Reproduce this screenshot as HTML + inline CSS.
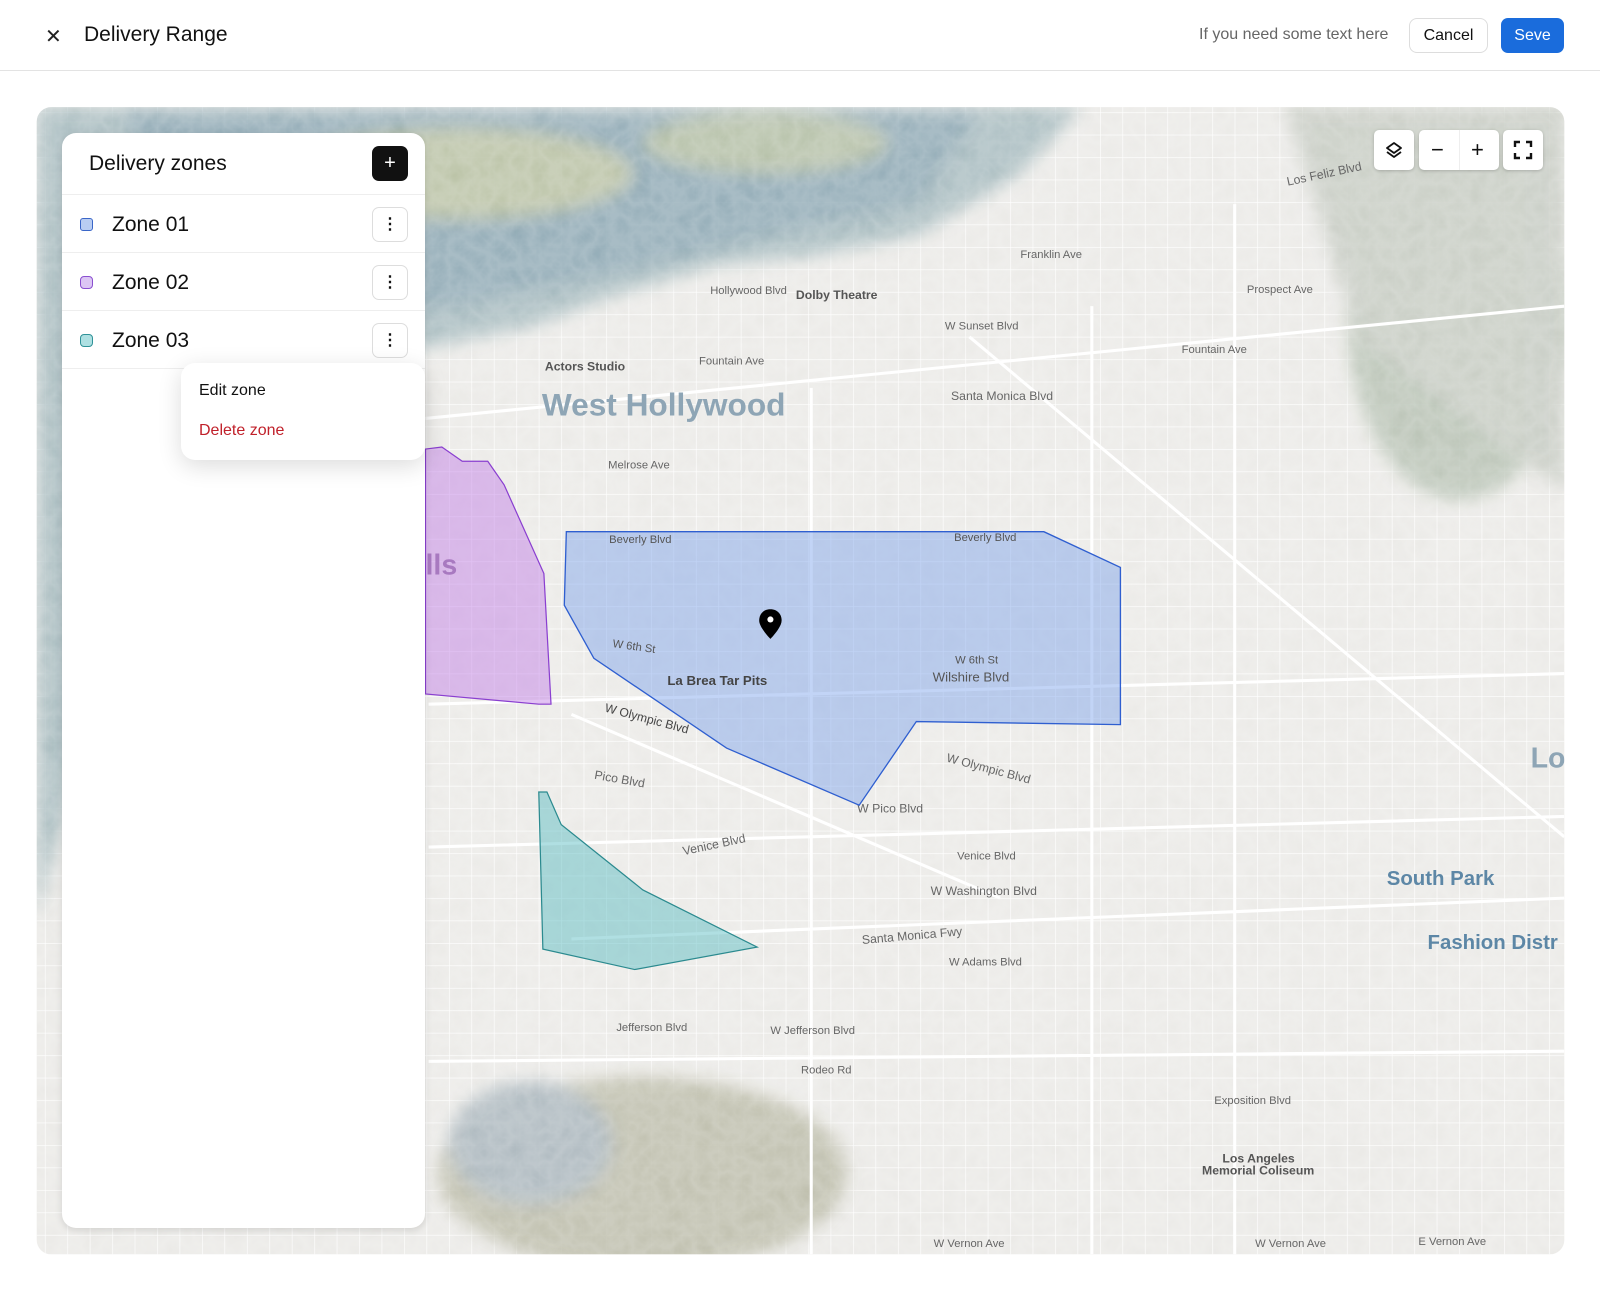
<!DOCTYPE html>
<html><head><meta charset="utf-8"><style>
*{box-sizing:border-box;margin:0;padding:0}
body{width:1600px;height:1290px;background:#fff;font-family:"Liberation Sans",sans-serif;position:relative;overflow:hidden;color:#111}
.top{position:absolute;left:0;top:0;width:1600px;height:71px;border-bottom:1px solid #e3e3e3}
.x{position:absolute;left:45px;top:24px;font-size:20px;color:#222}
.title{position:absolute;left:84px;top:23px;font-size:21px;color:#111}
.hint{position:absolute;left:1199px;top:26px;font-size:16px;color:#666}
.cancel{position:absolute;left:1409px;top:18px;width:79px;height:35px;border:1px solid #ddd;border-radius:8px;font-size:16px;text-align:center;line-height:33px}
.save{position:absolute;left:1501px;top:18px;width:63px;height:35px;background:#1a6cdc;color:#fff;border-radius:7px;font-size:16px;text-align:center;line-height:35px}
svg.map{position:absolute;left:0;top:0}
.panel{position:absolute;left:62px;top:133px;width:363px;height:1095px;background:#fff;border-radius:14px;box-shadow:0 2px 8px rgba(0,0,0,.12)}
.ph{height:62px;border-bottom:1px solid #eee;position:relative}
.ph span{position:absolute;left:27px;top:19px;font-size:21px}
.plus{position:absolute;right:17px;top:13px;width:36px;height:35px;background:#111;border-radius:7px;color:#fff;text-align:center;line-height:34px;font-size:20px}
.row{height:58px;border-bottom:1px solid #eee;position:relative}
.row .sq{position:absolute;left:18px;top:23px;width:13px;height:13px;border-radius:3px}
.row .lbl{position:absolute;left:50px;top:18px;font-size:21px}
.row .dots{position:absolute;right:17px;top:12px;width:36px;height:35px;border:1px solid #ddd;border-radius:7px;text-align:center;line-height:33px;font-weight:bold;font-size:16px}
.menu{position:absolute;left:181px;top:363px;width:244px;height:97px;background:#fff;border-radius:14px;box-shadow:0 6px 24px rgba(0,0,0,.14)}
.menu div{position:absolute;left:18px;font-size:16px}
.ctl{position:absolute;background:#fff;border-radius:5px;box-shadow:0 1px 3px rgba(0,0,0,.2);text-align:center;font-size:22px;line-height:40px}
</style></head><body>
<div class="top"><div class="x">✕</div><div class="title">Delivery Range</div><div class="hint">If you need some text here</div><div class="cancel">Cancel</div><div class="save">Seve</div></div>
<svg class="map" width="1600" height="1290" viewBox="0 0 1568 1264" preserveAspectRatio="none">
<defs>
<clipPath id="c"><rect x="36" y="105" width="1497" height="1124" rx="14"/></clipPath>
<pattern id="g" width="22" height="22" patternUnits="userSpaceOnUse"><path d="M0 0H22M0 0V22" stroke="#fff" stroke-width="1.2" fill="none"/></pattern>
<filter id="b"><feGaussianBlur stdDeviation="8"/></filter>
<filter id="b2"><feTurbulence baseFrequency="0.05" numOctaves="3" seed="3"/><feColorMatrix type="matrix" values="0 0 0 0 1  0 0 0 0 1  0 0 0 0 1  0 0 0 -1.2 1.1"/></filter>
</defs>
<g clip-path="url(#c)">
<rect x="0" y="0" width="1568" height="1264" fill="#ebeae7"/>
<rect x="0" y="0" width="1568" height="1264" fill="url(#g)"/>
<g filter="url(#b)" opacity=".9">
<path d="M36 105H1060L1000 170 900 230 800 250 700 260 600 290 520 320 420 340 300 360 150 440 90 700 36 900Z" fill="#a4b9bd"/>
<path d="M120 110H960L900 200 760 230 600 270 450 300 300 310 180 250Z" fill="#8aa6b2"/>
<ellipse cx="450" cy="170" rx="170" ry="45" fill="#b7c0a2"/>
<ellipse cx="750" cy="140" rx="120" ry="30" fill="#b2bea4"/>
<ellipse cx="1430" cy="310" rx="110" ry="180" fill="#b7c2b4"/>
<path d="M1260 105H1533V480L1450 420 1330 330 1290 200Z" fill="#c6cbc2"/>
<ellipse cx="630" cy="1150" rx="200" ry="95" fill="#bcbca9"/>
<ellipse cx="520" cy="1120" rx="80" ry="60" fill="#a9b5bc"/>
</g>
<rect x="36" y="105" width="1497" height="1124" filter="url(#b2)" opacity=".2"/>
<g stroke="#fff" stroke-width="3" fill="none">
<path d="M420 690L1533 660M560 700 980 880M420 830 1533 800M560 920 1533 880M420 1040 1533 1030M795 380V1229M1070 300V1229M1210 200V1229M950 330 1533 820M417 410 1533 300"/>
</g>
<g font-size="11" fill="#666">
<text x="1000" y="253">Franklin Ave</text><text x="926" y="323">W Sunset Blvd</text><text x="932" y="392" font-size="12">Santa Monica Blvd</text>
<text x="685" y="357">Fountain Ave</text><text x="596" y="459">Melrose Ave</text><text x="1158" y="346">Fountain Ave</text><text x="1222" y="287">Prospect Ave</text>
<text x="696" y="288">Hollywood Blvd</text><text x="927" y="746" font-size="12" transform="rotate(15 927 746)">W Olympic Blvd</text>
<text x="582" y="763" font-size="12" transform="rotate(10 582 763)">Pico Blvd</text><text x="670" y="838" font-size="12" transform="rotate(-12 670 838)">Venice Blvd</text>
<text x="912" y="877" font-size="12">W Washington Blvd</text><text x="845" y="925" font-size="12" transform="rotate(-5 845 925)">Santa Monica Fwy</text>
<text x="930" y="946">W Adams Blvd</text><text x="755" y="1013">W Jefferson Blvd</text><text x="604" y="1010">Jefferson Blvd</text><text x="785" y="1052">Rodeo Rd</text>
<text x="1190" y="1082">Exposition Blvd</text><text x="915" y="1222">W Vernon Ave</text><text x="1230" y="1222">W Vernon Ave</text><text x="1390" y="1220">E Vernon Ave</text>
<text x="840" y="796" font-size="12">W Pico Blvd</text><text x="938" y="842">Venice Blvd</text><text x="1262" y="182" font-size="12" transform="rotate(-12 1262 182)">Los Feliz Blvd</text>
</g>
<g font-weight="bold" fill="#555" font-size="12"><text x="780" y="293">Dolby Theatre</text><text x="534" y="363">Actors Studio</text>
<text x="1198" y="1139">Los Angeles</text><text x="1178" y="1151">Memorial Coliseum</text></g>
<text x="531" y="407" font-size="31" font-weight="bold" fill="#8ea5b5">West Hollywood</text>
<text x="1359" y="867" font-size="20" font-weight="bold" fill="#5d87a6">South Park</text>
<text x="1399" y="930" font-size="20" font-weight="bold" fill="#5d87a6">Fashion Distr</text>
<text x="1500" y="752" font-size="28" font-weight="bold" fill="#8ea5b5">Lo</text>
<polygon points="417,440 433,438 453,452 478,452 494,475 533,562 540,690 528,690 417,680" fill="rgba(190,120,230,.45)" stroke="#8a3fd0" stroke-width="1.2"/>
<text x="417" y="563" font-size="28" font-weight="bold" fill="#a879c0">lls</text>
<polygon points="555,521 1023,521 1098,556 1098,710 898,707 842,789 712,733 582,645 553,593" fill="rgba(120,160,235,.45)" stroke="#2f5fd0" stroke-width="1.3"/>
<polygon points="528,776 536,776 550,808 630,872 742,928 622,950 532,930" fill="rgba(80,185,190,.45)" stroke="#2b8a8f" stroke-width="1.2"/>
<g font-size="11" fill="#555"><text x="597" y="532">Beverly Blvd</text><text x="935" y="530">Beverly Blvd</text><text x="600" y="634" transform="rotate(8 600 634)">W 6th St</text><text x="936" y="650">W 6th St</text><text x="914" y="668" font-size="13">Wilshire Blvd</text></g>
<text x="654" y="671" font-size="13" font-weight="bold" fill="#444">La Brea Tar Pits</text>
<text x="592" y="697" font-size="12" fill="#444" transform="rotate(15 592 697)">W Olympic Blvd</text>
<path d="M755 597c-7 0-11 5-11 11 0 7 11 18 11 18s11-11 11-18c0-6-4-11-11-11z" fill="#000"/><circle cx="755" cy="607" r="3" fill="#fff"/>
</g>
</svg>
<div class="panel">
<div class="ph"><span>Delivery zones</span><div class="plus">+</div></div>
<div class="row"><div class="sq" style="background:#b9cdf2;border:1.5px solid #3a66c8"></div><div class="lbl">Zone 01</div><div class="dots">⋮</div></div>
<div class="row"><div class="sq" style="background:#dcc6f4;border:1.5px solid #8a4fd0;border-radius:4px"></div><div class="lbl">Zone 02</div><div class="dots">⋮</div></div>
<div class="row"><div class="sq" style="background:#aee0e2;border:1.5px solid #2f9298;border-radius:4px"></div><div class="lbl">Zone 03</div><div class="dots">⋮</div></div>
</div>
<div class="menu"><div style="top:19px;color:#111">Edit zone</div><div style="top:59px;color:#c0202a">Delete zone</div></div>
<div class="ctl" style="left:1374px;top:130px;width:40px;height:40px"><svg width="20" height="20" viewBox="0 0 20 20" style="margin-top:10px"><path d="M10 3l7 5-7 5-7-5z" fill="none" stroke="#111" stroke-width="1.8" stroke-linejoin="round"/><path d="M3 12l7 5 7-5" fill="none" stroke="#111" stroke-width="1.8" stroke-linejoin="round"/></svg></div>
<div class="ctl" style="left:1419px;top:130px;width:80px;height:40px"><span style="position:absolute;left:12px">−</span><span style="position:absolute;left:52px">+</span><div style="position:absolute;left:40px;top:0;width:1px;height:40px;background:#eee"></div></div>
<div class="ctl" style="left:1503px;top:130px;width:40px;height:40px"><svg width="20" height="20" viewBox="0 0 20 20" style="margin-top:10px" fill="none" stroke="#111" stroke-width="2.4"><path d="M2 7V2h5M13 2h5v5M18 13v5h-5M7 18H2v-5"/></svg></div>
</body></html>
